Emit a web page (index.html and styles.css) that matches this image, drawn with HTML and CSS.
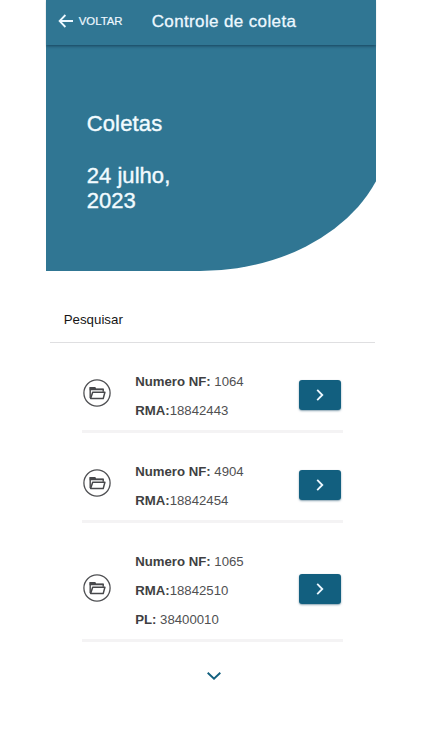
FILE: index.html
```html
<!DOCTYPE html>
<html lang="pt-BR">
<head>
<meta charset="utf-8">
<title>Controle de coleta</title>
<link rel="stylesheet" href="styles.css">
</head>
<body>
<svg width="0" height="0" class="defs">
  <symbol id="folder" viewBox="0 0 28 28">
    <circle cx="14" cy="14" r="13.1" fill="none" stroke="#505154" stroke-width="1.3"/>
    <path d="M7.2 19V8.8h4.4l1 1.6h7.6v2.4" fill="none" stroke="#47484b" stroke-width="1.4" stroke-linejoin="round"/>
    <path d="M6.6 8.1h5.6l.9 1.4h7.6v1.7H6.6z" fill="#47484b"/>
    <path d="M7.6 19.6l2.1-6.3h12.2l-1.7 6.3z" fill="#fff" stroke="#47484b" stroke-width="1.5" stroke-linejoin="round"/>
  </symbol>
  <symbol id="next" viewBox="0 0 8 12">
    <path d="M1.2 .9L6.3 6l-5.1 5.1" fill="none" stroke="#edf8ff" stroke-width="1.8"/>
  </symbol>
</svg>
<div class="app">
  <header class="bar">
    <a class="back">
      <svg width="16" height="14" viewBox="0 0 16 14"><path d="M7.4 1L1.6 7l5.8 6M1.8 7H15" fill="none" stroke="#edf8ff" stroke-width="1.8"/></svg>
      <span>VOLTAR</span>
    </a>
    <h1>Controle de coleta</h1>
  </header>
  <section class="hero">
    <h2>Coletas</h2>
    <p>24 julho,<br>2023</p>
  </section>
  <div class="search">Pesquisar</div>
  <main class="list">
    <article class="row">
      <svg class="folder"><use href="#folder"/></svg>
      <div class="info">
        <div><b>Numero NF:</b> 1064</div>
        <div><b>RMA:</b>18842443</div>
      </div>
      <button class="go"><svg><use href="#next"/></svg></button>
    </article>
    <article class="row">
      <svg class="folder"><use href="#folder"/></svg>
      <div class="info">
        <div><b>Numero NF:</b> 4904</div>
        <div><b>RMA:</b>18842454</div>
      </div>
      <button class="go"><svg><use href="#next"/></svg></button>
    </article>
    <article class="row">
      <svg class="folder"><use href="#folder"/></svg>
      <div class="info">
        <div><b>Numero NF:</b> 1065</div>
        <div><b>RMA:</b>18842510</div>
        <div><b>PL:</b> 38400010</div>
      </div>
      <button class="go"><svg><use href="#next"/></svg></button>
    </article>
  </main>
  <div class="more">
    <svg width="16" height="10" viewBox="0 0 16 10"><path d="M1.7 1.8L8 7.8l6.3-6" fill="none" stroke="#12607f" stroke-width="1.9"/></svg>
  </div>
</div>
</body>
</html>
```
FILE: styles.css
```css
* { box-sizing: border-box; }
body {
  margin: 0;
  background: #fff;
  font-family: "Liberation Sans", Arial, sans-serif;
}
h1, h2, p { margin: 0; font-weight: 400; }
svg { display: block; flex: none; }
.defs { position: absolute; }
.app { width: 330.5px; height: 750px; margin-left: 45.7px; }
.bar {
  position: relative;
  z-index: 1;
  display: flex;
  align-items: center;
  height: 45px;
  padding: 0 0 3px 12px;
  background: #307693;
  color: #edf8ff;
  box-shadow: 0 1px 3px rgba(0, 25, 45, .55);
  clip-path: inset(0 0 -8px 0);
}
.back { display: flex; align-items: center; gap: 5px; width: 94px; font-size: 11.4px; -webkit-text-stroke: .2px; }
.bar h1 { padding-top: 2px; font-size: 17px; letter-spacing: .37px; -webkit-text-stroke: .3px; white-space: nowrap; }
.hero {
  position: relative;
  overflow: hidden;
  height: 226px;
  padding: 66px 0 0 41px;
  color: #f2fbff;
  font-size: 22px;
  line-height: 26px;
  -webkit-text-stroke: .4px;
}
.hero::before {
  content: "";
  position: absolute;
  z-index: -1;
  top: 0;
  left: 0;
  width: 344px;
  height: 226px;
  background: #307693;
  border-bottom-right-radius: 190px 144px;
}
.hero h2 { font-size: 22px; letter-spacing: .15px; }
.hero p { margin-top: 26px; line-height: 25px; letter-spacing: .05px; }
.search {
  height: 72px;
  margin: 0 1px 0 4px;
  padding-left: 14px;
  border-bottom: 1px solid #dfdfe1;
  color: #151515;
  font-size: 13.3px;
  line-height: 97px;
}
.list { width: 261px; margin-left: 36.5px; }
.row {
  display: flex;
  align-items: center;
  padding: 24px 0 5px;
  border-bottom: 3px solid #f4f3f4;
}
.folder { width: 28px; height: 28px; margin: 0 0 6px .5px; }
.info {
  flex: 1;
  margin-left: 24.5px;
  color: #505052;
  font-size: 13.2px;
  line-height: 29px;
}
.info b { color: #3f3f42; }
.go {
  display: flex;
  align-items: center;
  justify-content: center;
  width: 42px;
  height: 30px;
  margin: 0 2.5px 3px 0;
  padding: 0;
  border: 0;
  border-radius: 3px;
  background: #125f7f;
  box-shadow: 0 1px 2px rgba(18, 70, 100, .5);
}
.go svg { width: 8px; height: 12px; }
.more { display: flex; justify-content: center; padding: 29px 0 0 6px; }
```
